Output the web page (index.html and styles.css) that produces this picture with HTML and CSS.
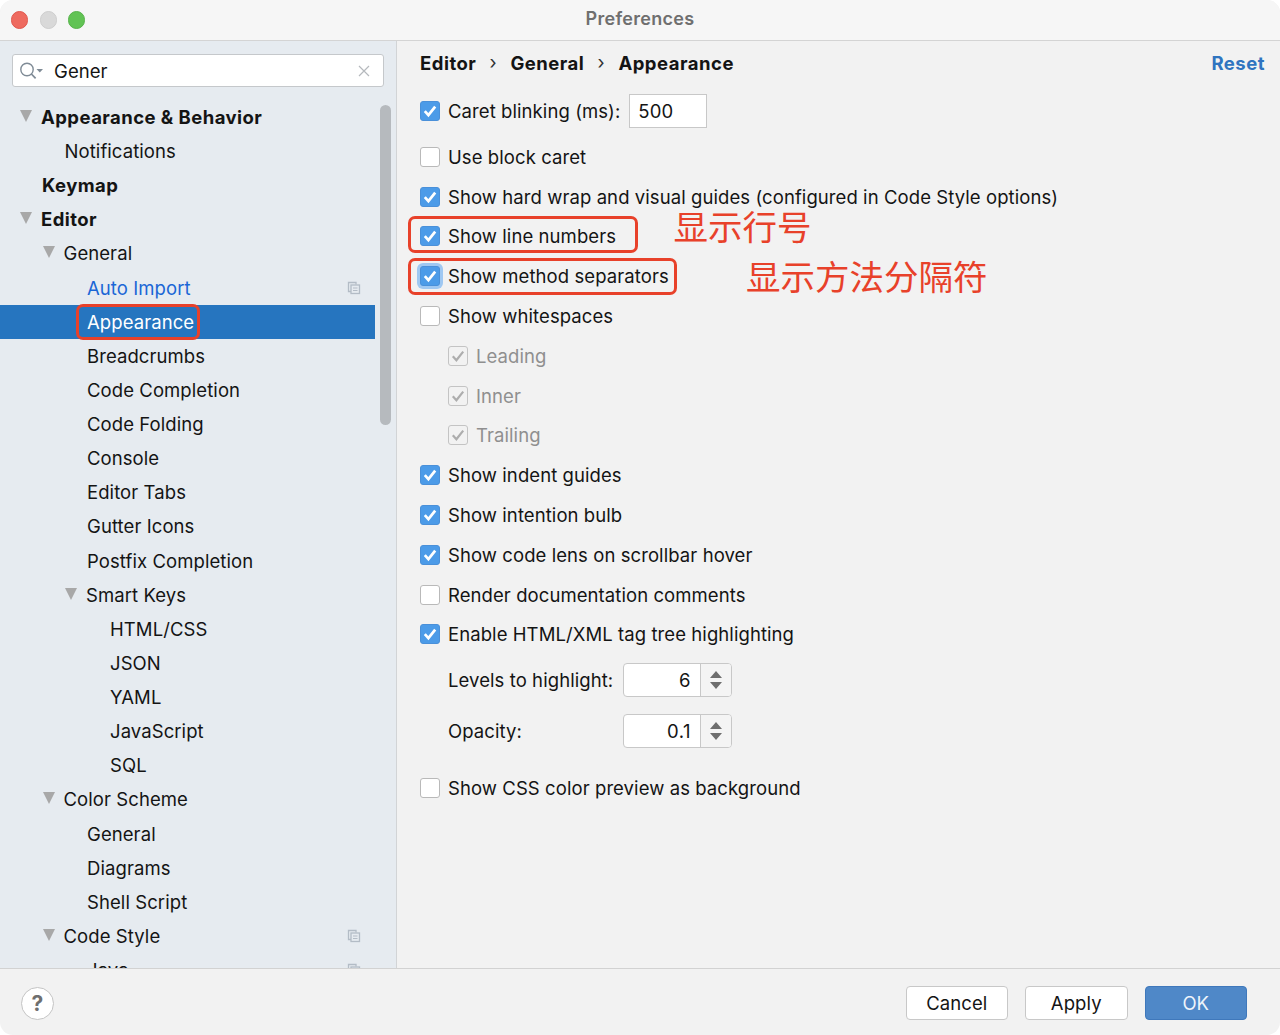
FILE: index.html
```html
<!DOCTYPE html>
<html lang="en">
<head>
<meta charset="utf-8">
<title>Preferences</title>
<link rel="stylesheet" href="styles.css">
</head>
<body>
<svg class="defs" width="0" height="0" aria-hidden="true">
  <defs>
    <g id="copy"><path d="M4 10.5H1.5V1.5H9V3.5" fill="none" stroke="#b3bcc6" stroke-width="1.3"/><rect x="4" y="4" width="8.5" height="8.5" fill="none" stroke="#b3bcc6" stroke-width="1.3"/><path d="M6 7h4.5M6 9.5h4.5" stroke="#b3bcc6" stroke-width="1.2"/></g>
    <path id="tick" d="M4.8 10.2l3.6 4L15.2 5.6" fill="none" stroke="#fff" stroke-width="2.7"/>
    <path id="tick-off" d="M4.8 10.2l3.6 4L15.2 5.6" fill="none" stroke="#adadad" stroke-width="2.2"/>
  </defs>
</svg>
<div class="window">
  <header class="titlebar">
    <div class="lights"><span class="light red"></span><span class="light grey"></span><span class="light green"></span></div>
    <div class="title">Preferences</div>
  </header>
  <div class="main">
    <aside class="sidebar">
      <div class="search">
        <svg class="search-icon" width="24" height="18" viewBox="0 0 24 18"><circle cx="7" cy="7.5" r="6.2" fill="none" stroke="#7f8b96" stroke-width="1.4"/><path d="M11.4 12l4.2 4.4" stroke="#7f8b96" stroke-width="1.7"/><path d="M16.5 7h6.5l-3.2 3.4z" fill="#7f8b96"/></svg>
        <span class="search-text">Gener</span>
        <svg class="search-x" width="12" height="12" viewBox="0 0 12 12"><path d="M1 1l10 10M11 1L1 11" stroke="#b5b9bd" stroke-width="1.2"/></svg>
      </div>
      <nav class="tree">
        <div class="row l0 bold"><i class="arrow"></i>Appearance &amp; Behavior</div>
        <div class="row l1">Notifications</div>
        <div class="row l0 bold">Keymap</div>
        <div class="row l0 bold"><i class="arrow"></i>Editor</div>
        <div class="row l1"><i class="arrow"></i>General</div>
        <div class="row l2 link">Auto Import<svg class="copy" width="14" height="14" viewBox="0 0 14 14"><use href="#copy"/></svg></div>
        <div class="row l2 selected"><span class="mark-wrap">Appearance<span class="mark mark-side"></span></span></div>
        <div class="row l2">Breadcrumbs</div>
        <div class="row l2">Code Completion</div>
        <div class="row l2">Code Folding</div>
        <div class="row l2">Console</div>
        <div class="row l2">Editor Tabs</div>
        <div class="row l2">Gutter Icons</div>
        <div class="row l2">Postfix Completion</div>
        <div class="row l2"><i class="arrow"></i>Smart Keys</div>
        <div class="row l3">HTML/CSS</div>
        <div class="row l3">JSON</div>
        <div class="row l3">YAML</div>
        <div class="row l3">JavaScript</div>
        <div class="row l3">SQL</div>
        <div class="row l1"><i class="arrow"></i>Color Scheme</div>
        <div class="row l2">General</div>
        <div class="row l2">Diagrams</div>
        <div class="row l2">Shell Script</div>
        <div class="row l1"><i class="arrow"></i>Code Style<svg class="copy" width="14" height="14" viewBox="0 0 14 14"><use href="#copy"/></svg></div>
        <div class="row l2">Java<svg class="copy" width="14" height="14" viewBox="0 0 14 14"><use href="#copy"/></svg></div>
      </nav>
      <div class="scrollbar"></div>
    </aside>
    <section class="content">
      <div class="crumbs">
        <span>Editor</span><span class="sep">›</span><span>General</span><span class="sep">›</span><span>Appearance</span>
        <a class="reset">Reset</a>
      </div>
      <div class="opts">
        <div class="opt first"><span class="cb on"><svg viewBox="0 0 20 20"><use href="#tick"/></svg></span><span>Caret blinking (ms):</span><span class="field">500</span></div>
        <div class="opt gap-a"><span class="cb"></span><span>Use block caret</span></div>
        <div class="opt"><span class="cb on"><svg viewBox="0 0 20 20"><use href="#tick"/></svg></span><span>Show hard wrap and visual guides (configured in Code Style options)</span></div>
        <div class="opt"><span class="cb on"><svg viewBox="0 0 20 20"><use href="#tick"/></svg></span><span>Show line numbers</span></div>
        <div class="opt"><span class="cb on focus"><svg viewBox="0 0 20 20"><use href="#tick"/></svg></span><span>Show method separators</span></div>
        <div class="opt"><span class="cb"></span><span>Show whitespaces</span></div>
        <div class="opt sub dim"><span class="cb off"><svg viewBox="0 0 20 20"><use href="#tick-off"/></svg></span><span>Leading</span></div>
        <div class="opt sub dim"><span class="cb off"><svg viewBox="0 0 20 20"><use href="#tick-off"/></svg></span><span>Inner</span></div>
        <div class="opt sub dim"><span class="cb off"><svg viewBox="0 0 20 20"><use href="#tick-off"/></svg></span><span>Trailing</span></div>
        <div class="opt"><span class="cb on"><svg viewBox="0 0 20 20"><use href="#tick"/></svg></span><span>Show indent guides</span></div>
        <div class="opt"><span class="cb on"><svg viewBox="0 0 20 20"><use href="#tick"/></svg></span><span>Show intention bulb</span></div>
        <div class="opt"><span class="cb on"><svg viewBox="0 0 20 20"><use href="#tick"/></svg></span><span>Show code lens on scrollbar hover</span></div>
        <div class="opt"><span class="cb"></span><span>Render documentation comments</span></div>
        <div class="opt"><span class="cb on"><svg viewBox="0 0 20 20"><use href="#tick"/></svg></span><span>Enable HTML/XML tag tree highlighting</span></div>
        <div class="spin-row levels"><span class="spin-label">Levels to highlight:</span><span class="spinner"><span class="spin-val">6</span><span class="spin-btn"><svg width="14" height="20" viewBox="0 0 14 20"><path d="M7 1l6 7H1zM7 19l6-7H1z" fill="#6e6e6e"/></svg></span></span></div>
        <div class="spin-row opacity"><span class="spin-label">Opacity:</span><span class="spinner"><span class="spin-val">0.1</span><span class="spin-btn"><svg width="14" height="20" viewBox="0 0 14 20"><path d="M7 1l6 7H1zM7 19l6-7H1z" fill="#6e6e6e"/></svg></span></span></div>
        <div class="opt last"><span class="cb"></span><span>Show CSS color preview as background</span></div>
      </div>
    </section>
  </div>
  <footer class="footer">
    <span class="help">?</span>
    <div class="buttons">
      <button class="btn">Cancel</button>
      <button class="btn">Apply</button>
      <button class="btn primary">OK</button>
    </div>
  </footer>
  <span class="mark mark-line"></span>
  <span class="mark mark-method"></span>
  <span class="note note-line">显示行号</span>
  <span class="note note-method">显示方法分隔符</span>
</div>
</body>
</html>
```

FILE: styles.css
```css
* { box-sizing: border-box; }
html, body { margin: 0; height: 100%; background: #fff; overflow: hidden; }
.defs { position: absolute; }
body { font-family: Inter, "Liberation Sans", sans-serif; font-size: 18.5px; letter-spacing: 0.08px; color: #141414; }
.window { position: relative; width: 1280px; height: 1035px; display: flex; flex-direction: column; background: #f2f2f2; border-radius: 13px; overflow: hidden; }

.titlebar { height: 41px; flex: none; display: flex; align-items: center; background: #f6f6f6; border-bottom: 1px solid #d4d4d4; position: relative; }
.lights { display: flex; gap: 11.25px; padding-left: 11px; }
.light { width: 17.25px; height: 17.25px; border-radius: 50%; }
.red { background: #ee6a5f; border: 1px solid #e0564c; }
.grey { background: #d9d9d9; border: 1px solid #cdcdcd; }
.green { background: #61c354; border: 1px solid #57b24b; }
.title { position: absolute; left: 0; right: 0; text-align: center; font-size: 18px; font-weight: 600; letter-spacing: 0.3px; color: #6f6f6f; top: 8px; }

.main { flex: 1; min-height: 0; display: flex; }
.sidebar { width: 397px; flex: none; position: relative; background: #e6ebf0; border-right: 1px solid #d2d4d6; padding-top: 13px; overflow: hidden; }
.search { margin-left: 12px; width: 372px; height: 33px; background: #fff; border: 1px solid #c5c8cb; border-radius: 3px; display: flex; align-items: center; padding: 0 13px 0 7px; }
.search-text { margin-left: 10px; flex: 1; }
.search-icon { flex: none; margin-top: 1px; }
.tree { width: 375px; margin-top: 12.9px; }
.row { height: 34.125px; display: flex; align-items: center; white-space: nowrap; padding-right: 14px; }
.l0 { padding-left: 42px; }
.l1 { padding-left: 64.5px; }
.l2 { padding-left: 87px; }
.l3 { padding-left: 110px; }
.bold { font-weight: 700; letter-spacing: 0.45px; }
.arrow { flex: none; width: 0; height: 0; margin-left: -22px; margin-right: 9px; border-left: 6.5px solid transparent; border-right: 6.5px solid transparent; border-top: 12px solid #a8a8a8; margin-top: -2px; }
.link { color: #1a66d6; }
.selected { background: #2675bf; color: #fff; }
.copy { margin-left: auto; flex: none; }
.scrollbar { position: absolute; left: 380px; top: 64px; width: 11px; height: 320px; border-radius: 6px; background: #b6babe; }
.mark-wrap { position: relative; }

.content { flex: 1; min-width: 0; padding: 0 15px 0 23px; }
.crumbs { height: 44px; display: flex; align-items: center; font-weight: 700; letter-spacing: 0.5px; }
.sep { font-weight: 400; width: 34px; text-align: center; color: #333; margin-top: -3px; }
.reset { margin-left: auto; color: #2f74c0; }
.opts { display: flex; flex-direction: column; }
.opt { display: flex; align-items: center; height: 39.8px; gap: 8px; }
.opt.first { margin-top: 6px; height: 40px; }
.opt.gap-a { margin-top: 6px; }
.opt.sub { padding-left: 28px; }
.dim { color: #8f8f8f; }
.cb { flex: none; width: 20px; height: 20px; border-radius: 3px; background: #fff; border: 1px solid #b9b9b9; display: block; }
.cb svg { display: block; width: 100%; height: 100%; }
.cb.on { background: #4c9be8; border: 1px solid #4a90d9; }
.cb.on svg { margin: -1px; width: 20px; height: 20px; }
.cb.off { background: #f2f2f2; border-color: #c4c4c4; }
.cb.off svg { margin: -1px; width: 20px; height: 20px; }
.cb.focus { box-shadow: 0 0 0 3px #9fc8f2; border-color: #4a90d9; }
.field { width: 78px; height: 34px; margin-left: 1px; background: #fff; border: 1px solid #c8c8c8; padding-left: 8px; display: flex; align-items: center; }
.spin-row { display: flex; align-items: center; padding-left: 28px; height: 34px; }
.spin-row.levels { margin-top: 9px; }
.spin-row.opacity { margin-top: 17px; }
.spin-label { width: 175px; }
.spinner { width: 109px; height: 34px; background: #fff; border: 1px solid #c8c8c8; border-radius: 4px; display: flex; }
.spin-val { flex: 1; display: flex; align-items: center; justify-content: flex-end; padding-right: 9px; letter-spacing: 0.5px; }
.spin-btn { width: 31px; background: #f4f4f4; border-left: 1px solid #c8c8c8; border-radius: 0 3px 3px 0; display: flex; align-items: center; justify-content: center; }
.opt.last { margin-top: 20px; }

.footer { height: 67px; flex: none; display: flex; align-items: center; justify-content: space-between; padding: 0 33px 0 21px; border-top: 1px solid #d2d2d2; }
.help { width: 33px; height: 33px; border-radius: 50%; background: #fff; border: 1px solid #c4c4c4; display: flex; align-items: center; justify-content: center; font-weight: 700; font-size: 21px; color: #6f6f6f; margin-top: 2px; }
.buttons { display: flex; gap: 17px; margin-top: 2px; }
.btn { width: 102.5px; height: 34px; padding: 0; font: inherit; letter-spacing: inherit; color: #141414; background: #fff; border: 1px solid #c8c8c8; border-radius: 4px; }
.btn.primary { background: #4f88c8; border-color: #3f78bb; color: #eef4fb; }

.mark { position: absolute; border: 3.5px solid #e8412a; border-radius: 7px; pointer-events: none; }
.mark-side { left: -11px; right: -6px; top: -7px; height: 36px; }
.mark-line { left: 408px; top: 216px; width: 229.5px; height: 37px; }
.mark-method { left: 408px; top: 257.5px; width: 268.5px; height: 37.5px; }
.note { position: absolute; font-family: "Noto Sans CJK SC", sans-serif; font-size: 34.5px; line-height: 32px; letter-spacing: 0; color: #e8412a; white-space: nowrap; }
.note-line { left: 673.5px; top: 209px; }
.note-method { left: 746px; top: 259px; }
```
